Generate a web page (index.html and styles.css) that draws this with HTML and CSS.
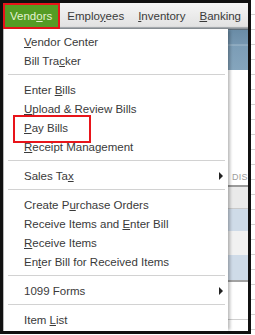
FILE: index.html
```html
<!DOCTYPE html>
<html lang="en">
<head>
	<meta charset="UTF-8">
	<title>Vendors menu</title>
	<link rel="stylesheet" href="styles.css">
</head>
<body>
	<div id="screen">
		<div id="menubar">
			<a class="top active">Vend<u>o</u>rs</a>
			<a class="top">Emplo<u>y</u>ees</a>
			<a class="top"><u>I</u>nventory</a>
			<a class="top"><u>B</u>anking</a>
		</div>
		<div id="main">
			<ul id="dropdown">
				<li><u>V</u>endor Center</li>
				<li>Bill Tra<u>c</u>ker</li>
				<li class="sep"></li>
				<li>Enter <u>B</u>ills</li>
				<li><u>U</u>pload &amp; Review Bills</li>
				<li class="marked"><u>P</u>ay Bills</li>
				<li><u>R</u>eceipt Management</li>
				<li class="sep"></li>
				<li><span class="arrow"></span>Sales Ta<u>x</u></li>
				<li class="sep"></li>
				<li>Create P<u>u</u>rchase Orders</li>
				<li>Receive Items and <u>E</u>nter Bill</li>
				<li><u>R</u>eceive Items</li>
				<li>En<u>t</u>er Bill for Received Items</li>
				<li class="sep"></li>
				<li><span class="arrow"></span>1099 Forms</li>
				<li class="sep"></li>
				<li>Item <u>L</u>ist</li>
			</ul>
			<div id="behind">
				<div class="head"></div>
				<div class="blank"><span class="col">DISC</span></div>
				<div class="row grey"></div>
				<div class="row blue"></div>
				<div class="row light"></div>
				<div class="row blue tall"></div>
				<div class="row white"></div>
			</div>
		</div>
	</div>
</body>
</html>
```

FILE: styles.css
```css
* {
	margin: 0;
	padding: 0;
	box-sizing: border-box;
}
body {
	width: 255px;
	height: 335px;
	overflow: hidden;
	font-family: "Liberation Sans", Arial, sans-serif;
	font-size: 11.5px;
	color: #3a3a3a;
	background: #fff repeating-linear-gradient(180deg, #fff 0, #fff 14px, #d4d4d4 14px, #d4d4d4 15px);
}
ul {
	list-style: none;
}
#screen {
	width: 251px;
	height: 334px;
	border: 3px solid #111;
	background: #fff;
	display: flex;
	flex-direction: column;
}
#menubar {
	height: 26px;
	display: flex;
	align-items: stretch;
	background: linear-gradient(#f5f5f5, #e2e2e2 90%, #8d949a 96%, #8d949a);
	flex-shrink: 0;
}
.top {
	display: flex;
	align-items: center;
	padding: 0 7px;
	white-space: nowrap;
}
.top.active {
	padding: 0 6px 0 5px;
	background: #559c24;
	color: #e4f2d2;
	border: 2px solid #e8141a;
}
#main {
	flex: 1;
	display: flex;
	min-height: 0;
}
#dropdown {
	width: 225px;
	flex-shrink: 0;
	padding: 3px 0 1px;
	background: #fff;
	border-left: 1px solid #b9b9b9;
	box-shadow: 3px 0 3px -1px rgba(0, 0, 0, 0.28);
	position: relative;
	z-index: 1;
}
#dropdown li {
	height: 19px;
	line-height: 20px;
	padding-left: 20px;
	white-space: nowrap;
	position: relative;
}
#dropdown li.sep {
	height: 10px;
	padding: 0;
	margin: 0 3px 0 4px;
	background: linear-gradient(transparent 4px, #d2d2d2 4px, #d2d2d2 5px, transparent 5px);
}
.marked:before {
	content: '';
	position: absolute;
	left: 9px;
	top: -3px;
	width: 74px;
	height: 24px;
	border: 2px solid #e8141a;
}
.arrow {
	float: right;
	margin: 6px 5px 0 0;
	width: 0;
	height: 0;
	border-left: 4px solid #222;
	border-top: 4px solid transparent;
	border-bottom: 4px solid transparent;
}
#behind {
	flex: 1;
	display: flex;
	flex-direction: column;
	overflow: hidden;
}
.head {
	height: 41px;
	border-top: 1px solid #5d6c78;
	background: linear-gradient(#6a8ca6, #7596b0 14px, #a3bbcc 15px, #7c9db6 16px, #85a5bd);
}
.blank {
	height: 117px;
	position: relative;
	border-bottom: 2px solid #9a9a9a;
}
.col {
	position: absolute;
	left: 4px;
	top: 102px;
	font-size: 9px;
	color: #9c9c9c;
	letter-spacing: 0.3px;
}
.row {
	height: 22px;
}
.grey {
	background: #eaeaea;
	border-bottom: 1px solid #c9c9c9;
}
.blue {
	background: #cfdbe8;
}
.light {
	height: 24px;
	background: #f1f1f1;
}
.tall {
	height: 27px;
	border-bottom: 2px solid #a2a2a2;
}
.white {
	flex: 1;
	background: linear-gradient(#fff 37px, #cfcfcf 37px, #cfcfcf 38px, #fff 38px);
}
```
